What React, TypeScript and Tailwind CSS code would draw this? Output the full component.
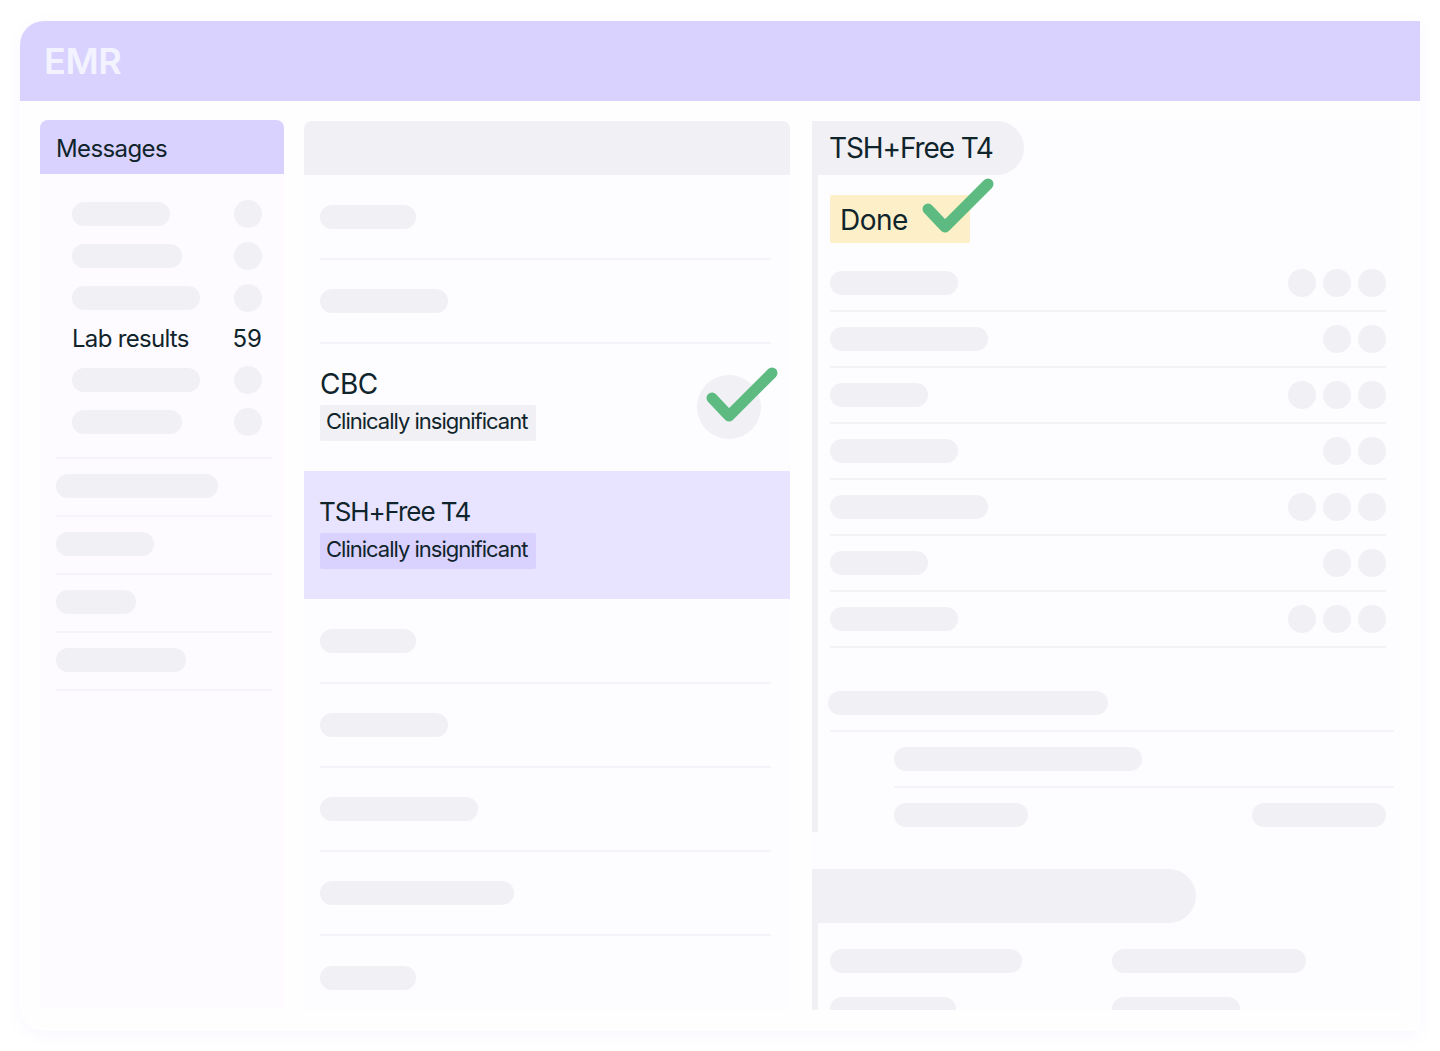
const font = { fontFamily: "Inter, sans-serif" }

function Bar({ w, className = "" }: { w: string; className?: string }) {
  return <div className={`h-6 shrink-0 rounded-full bg-[#f1f0f5] ${w} ${className}`} />
}

function Dot() {
  return <div className="h-7 w-7 shrink-0 rounded-full bg-[#f1f0f5]" />
}

function Check({ className }: { className: string }) {
  return (
    <svg viewBox="0 0 72 56" fill="none" className={`absolute h-14 w-[72px] ${className}`}>
      <path d="M6 31 L23 49 L66 6" stroke="#5dbb82" strokeWidth="11" strokeLinecap="round" strokeLinejoin="round" />
    </svg>
  )
}

function MessageRow({ w }: { w: string }) {
  return (
    <div className="flex h-[42px] items-center justify-between pl-4 pr-[6px]">
      <Bar w={w} />
      <Dot />
    </div>
  )
}

function LineRow({ w }: { w: string }) {
  return (
    <div className="flex h-[58px] items-center border-b-2 border-[#f5f3f9] pb-[2px]">
      <Bar w={w} />
    </div>
  )
}

function ListRow({ w, last }: { w: string; last?: boolean }) {
  return (
    <div className={`ml-4 mr-[19px] flex h-[84px] items-center ${last ? "" : "border-b-2 border-[#f5f3f9]"}`}>
      <Bar w={w} />
    </div>
  )
}

function ResultRow({ w, dots }: { w: string; dots: number }) {
  return (
    <div className="flex h-14 items-center justify-between border-b-2 border-[#f3f2f6]">
      <Bar w={w} />
      <div className="flex gap-[7px]">
        {Array.from({ length: dots }).map((_, i) => <Dot key={i} />)}
      </div>
    </div>
  )
}

export default function App() {
  const results: [string, number][] = [
    ["w-[128px]", 3], ["w-[158px]", 2], ["w-[98px]", 3], ["w-[128px]", 2],
    ["w-[158px]", 3], ["w-[98px]", 2], ["w-[128px]", 3],
  ]

  return (
    <div style={font} className="h-[1051px] w-[1440px] overflow-hidden bg-white px-5 pt-[21px] text-[#10242b]">
      <div className="h-[1010px] overflow-hidden rounded-l-3xl bg-[#fefefe] shadow-[0_4px_20px_#f8f6ff]">
        {/* Header */}
        <div className="flex h-20 items-center bg-[#d9d2ff] pl-6">
          <span className="text-[36px] font-semibold tracking-[-0.4px] text-[#f3f2ff]">EMR</span>
        </div>

        <div className="flex h-[910px] items-start pl-5 pt-[19px]">
          {/* Messages */}
          <div className="h-[888px] w-[244px] shrink-0 bg-[#fdfbff]">
            <div className="flex h-[54px] items-center rounded-t-lg bg-[#d9d2ff] pl-4 pt-[3px] text-2xl tracking-[-0.6px]">Messages</div>
            <div className="px-4 pt-[19px]">
              <MessageRow w="w-[98px]" />
              <MessageRow w="w-[110px]" />
              <MessageRow w="w-[128px]" />
              <div className="flex h-10 items-center justify-between pb-px pl-4 pr-[6px] text-2xl tracking-[-0.7px]">
                <span>Lab results</span>
                <span className="tracking-normal">59</span>
              </div>
              <MessageRow w="w-[128px]" />
              <MessageRow w="w-[110px]" />
            </div>
            <div className="ml-4 mr-3 mt-[14px] border-t-2 border-[#f5f3f9]">
              <LineRow w="w-[162px]" />
              <LineRow w="w-[98px]" />
              <LineRow w="w-[80px]" />
              <LineRow w="w-[130px]" />
            </div>
          </div>

          {/* Lab list */}
          <div className="relative ml-5 mt-px h-[889px] w-[486px] shrink-0 bg-[#fdfcff]">
            <div className="mb-px h-[54px] rounded-t-lg bg-[#f0f0f5]" />
            <ListRow w="w-[96px]" />
            <ListRow w="w-[128px]" />
            <div className="h-[127px] px-4 pt-[25px]">
              <div className="text-[28px] leading-[30px] tracking-[-0.5px]">CBC</div>
              <div className="mt-[6px] flex h-9 w-fit items-center rounded-[2px] bg-[#f1f1f5] pb-[3px] pl-[6px] pr-[9px] text-[22px] tracking-[-1px]">Clinically insignificant</div>
            </div>
            <div className="mb-px h-[128px] bg-[#e8e4ff] px-4 pt-[26px]">
              <div className="-ml-px text-[26px] leading-[30px] tracking-[-1.1px]">TSH+Free T4</div>
              <div className="mt-[6px] flex h-9 w-fit items-center rounded-[2px] bg-[#d9d2ff] pb-[3px] pl-[6px] pr-[9px] text-[22px] tracking-[-1px]">Clinically insignificant</div>
            </div>
            <ListRow w="w-[96px]" />
            <ListRow w="w-[128px]" />
            <ListRow w="w-[158px]" />
            <ListRow w="w-[194px]" />
            <ListRow w="w-[96px]" last />
            <div className="absolute left-[393px] top-[254px] h-16 w-16 rounded-full bg-[#f1f1f5]" />
            <Check className="left-[402px] top-[246px]" />
          </div>

          {/* Detail */}
          <div className="relative ml-[22px] mt-px h-[889px] w-[588px] shrink-0 overflow-hidden bg-[#fdfcff]">
            <div className="flex h-[54px] w-[212px] items-center rounded-r-[27px] bg-[#f0f0f5] pl-[17px] text-[28px] tracking-[-1.1px]">TSH+Free T4</div>
            <div className="h-[657px] border-l-[6px] border-[#f0f0f5] pl-3 pr-[6px] pt-5">
              <div className="flex h-12 w-[140px] items-center rounded-[2px] bg-[#fdf0c8] pl-[10px] pt-px text-[28px] tracking-[-0.5px]">Done</div>
              <div className="mr-2 mt-[13px]">
                {results.map(([w, dots], i) => <ResultRow key={i} w={w} dots={dots} />)}
              </div>
              <Bar w="w-[280px]" className="-ml-[2px] mt-[43px]" />
              <div className="mt-[15px] border-t-2 border-[#f5f3f9] pl-16 pt-[15px]">
                <Bar w="w-[248px]" />
              </div>
              <div className="ml-[64px] mt-[15px] flex items-center justify-between border-t-2 border-[#f5f3f9] pt-[15px]">
                <Bar w="w-[134px]" />
                <Bar w="w-[134px]" className="mr-2" />
              </div>
            </div>
            <div className="mt-[37px] h-[54px] w-[384px] rounded-r-[27px] bg-[#f0f0f5]" />
            <div className="h-[100px] border-l-[6px] border-[#f0f0f5] pl-3 pt-[26px]">
              <div className="flex gap-[90px]">
                <Bar w="w-[192px]" />
                <Bar w="w-[194px]" />
              </div>
              <div className="mt-6 flex gap-[156px]">
                <Bar w="w-[126px]" />
                <Bar w="w-[128px]" />
              </div>
            </div>
            <Check className="left-[110px] top-[57px]" />
          </div>
        </div>
      </div>
    </div>
  )
}
